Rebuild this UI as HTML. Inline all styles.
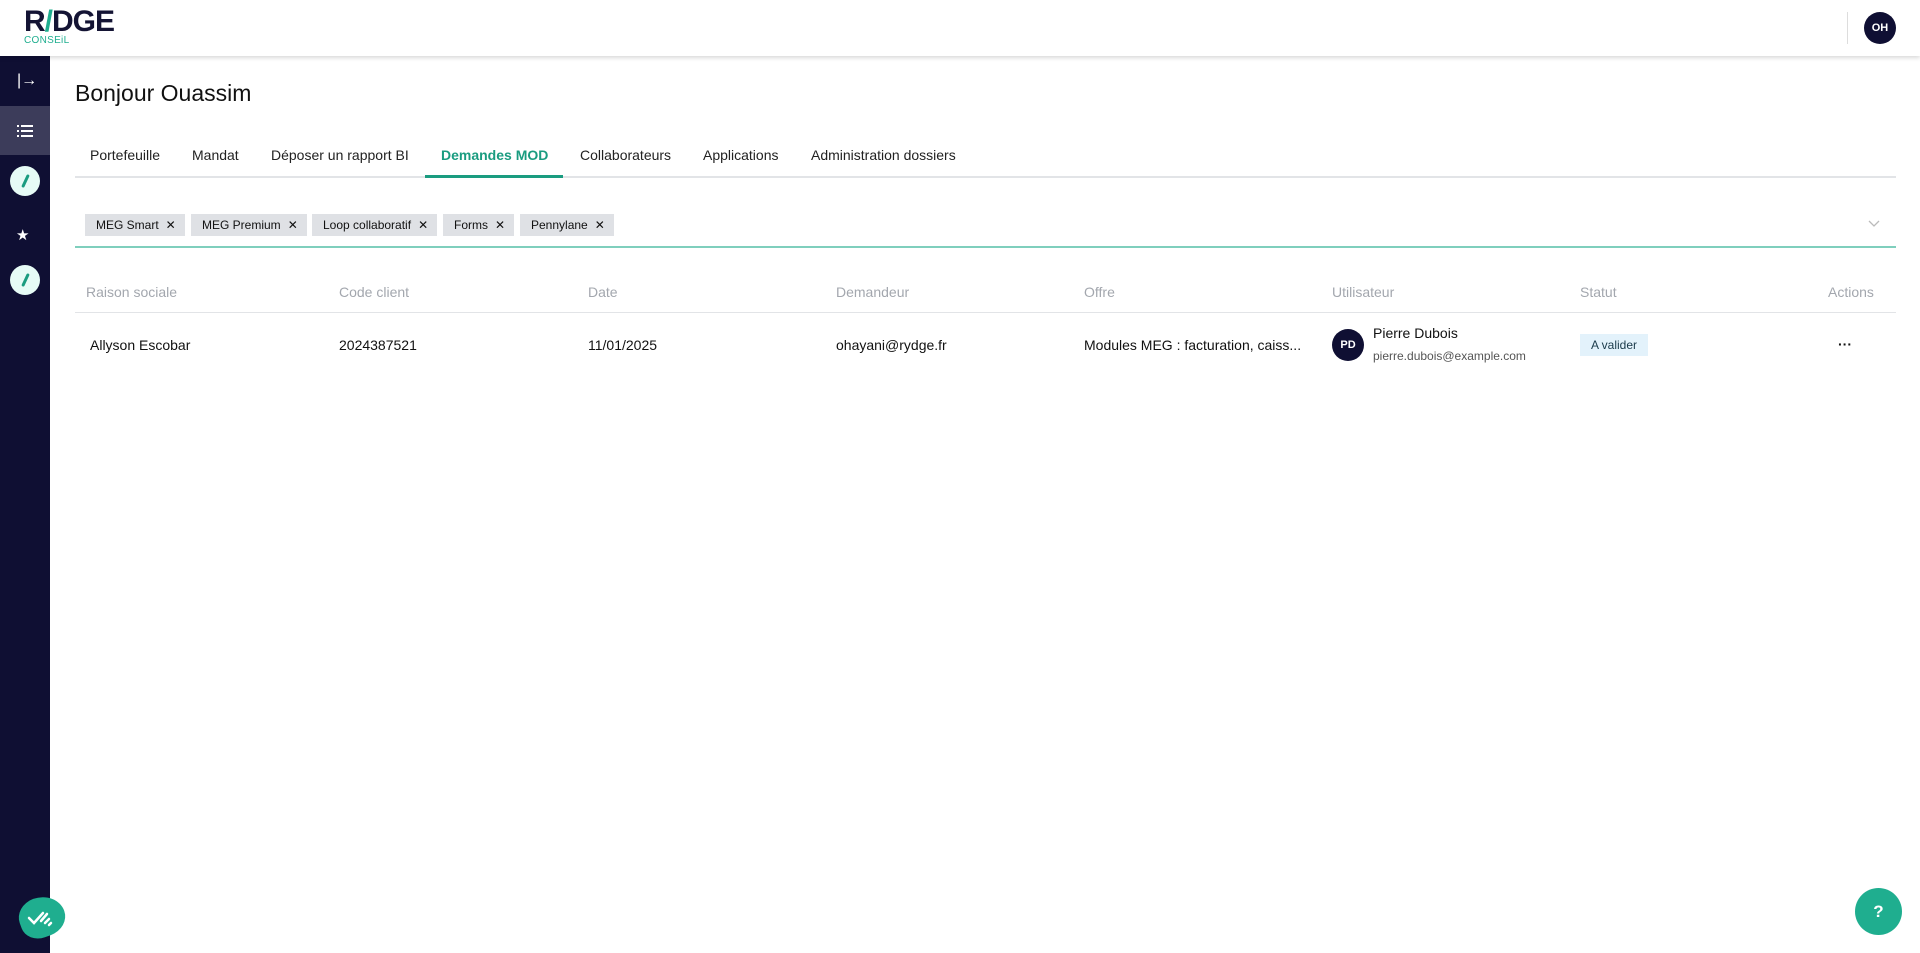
<!DOCTYPE html>
<html><head><meta charset="utf-8"><style>
*{box-sizing:border-box;margin:0;padding:0}
body{width:1920px;height:953px;overflow:hidden;background:#fff;font-family:"Liberation Sans",Arial,sans-serif;color:#111;position:relative}
.hdr{position:absolute;left:0;top:0;width:1920px;height:56px;background:#fff;box-shadow:0 2px 4px rgba(0,0,0,.15);z-index:2}
.side{position:absolute;left:0;top:56px;width:50px;height:897px;background:#0f0f33}
.abs{position:absolute}
.tab{position:absolute;top:147px;font-size:14px;color:#222}
.chip{position:absolute;top:214px;height:22px;background:#dfe1e5;font-size:12px;line-height:22px;padding:0 9px 0 11px;color:#111;white-space:nowrap}
.chip span{margin-left:7px;font-size:12px}
.th{position:absolute;top:284px;font-size:14px;color:#a3a7ae}
.td{position:absolute;top:337px;font-size:14px;color:#111}
.circ{position:absolute;left:10px;width:30px;height:30px;border-radius:50%;background:#e6fbf6}
.circ:after{content:"";position:absolute;left:14px;top:8px;width:3px;height:14px;background:#1a9c80;transform:rotate(25deg);border-radius:2px}
</style></head><body>
<div class="hdr">
  <div class="abs" style="left:24px;top:9px;font-size:30px;font-weight:bold;letter-spacing:-1px;color:#141434;line-height:26px">R<span style="color:#1fae8f">/</span>DGE</div>
  <div class="abs" style="left:24px;top:35px;font-size:10px;color:#1fae8f;letter-spacing:.3px">CONSEiL</div>
  <div class="abs" style="left:1847px;top:12px;width:1px;height:32px;background:#ddd"></div>
  <div class="abs" style="left:1864px;top:12px;width:32px;height:32px;border-radius:50%;background:#0f0f33;color:#fff;font-size:11px;font-weight:bold;text-align:center;line-height:32px">OH</div>
</div>
<div class="side">
  <div class="abs" style="left:17px;top:17px;color:#fff;font-size:16px;line-height:16px">|&#8594;</div>
  <div class="abs" style="left:0;top:50px;width:50px;height:49px;background:#3c3c5a"></div>
  <svg class="abs" style="left:17px;top:68px" width="16" height="14"><g fill="#fff"><rect x="0" y="1" width="2" height="2"/><rect x="4" y="1" width="12" height="2"/><rect x="0" y="6" width="2" height="2"/><rect x="4" y="6" width="12" height="2"/><rect x="0" y="11" width="2" height="2"/><rect x="4" y="11" width="12" height="2"/></g></svg>
  <div class="circ" style="top:110px"></div>
  <div class="abs" style="left:16px;top:170px;color:#fff;font-size:15px">&#9733;</div>
  <div class="circ" style="top:209px"></div>
</div>
<div class="abs" style="left:19px;top:897px;width:46px;height:40px;background:#1fae8f;border-radius:50% 60% 50% 45%;transform:rotate(-20deg)"></div>
<svg class="abs" style="left:26px;top:904px" width="32" height="26"><g stroke="#fff" stroke-width="2.5" fill="none" stroke-linecap="round"><path d="M3 14l5 5 9-10"/><path d="M15 17l6-7M19 19l4-4M23 21l2-2"/></g></svg>

<div class="abs" style="left:75px;top:80px;font-size:23px;color:#111">Bonjour Ouassim</div>
<div class="tab" style="left:90px">Portefeuille</div>
<div class="tab" style="left:192px">Mandat</div>
<div class="tab" style="left:271px">Déposer un rapport BI</div>
<div class="tab" style="left:441px;color:#1a9c80;font-weight:bold">Demandes MOD</div>
<div class="tab" style="left:580px">Collaborateurs</div>
<div class="tab" style="left:703px">Applications</div>
<div class="tab" style="left:811px">Administration dossiers</div>
<div class="abs" style="left:75px;top:176px;width:1821px;height:2px;background:#e2e4e7"></div>
<div class="abs" style="left:425px;top:175px;width:138px;height:3px;background:#1a9c80"></div>

<div class="chip" style="left:85px">MEG Smart<span>✕</span></div>
<div class="chip" style="left:191px">MEG Premium<span>✕</span></div>
<div class="chip" style="left:312px">Loop collaboratif<span>✕</span></div>
<div class="chip" style="left:443px">Forms<span>✕</span></div>
<div class="chip" style="left:520px">Pennylane<span>✕</span></div>
<svg class="abs" style="left:1868px;top:220px" width="12" height="8"><path d="M1 1l5 5 5-5" stroke="#bbb" fill="none" stroke-width="1.3"/></svg>
<div class="abs" style="left:75px;top:246px;width:1821px;height:2px;background:#7fcfbd"></div>

<div class="th" style="left:86px">Raison sociale</div>
<div class="th" style="left:339px">Code client</div>
<div class="th" style="left:588px">Date</div>
<div class="th" style="left:836px">Demandeur</div>
<div class="th" style="left:1084px">Offre</div>
<div class="th" style="left:1332px">Utilisateur</div>
<div class="th" style="left:1580px">Statut</div>
<div class="th" style="left:1828px">Actions</div>
<div class="abs" style="left:75px;top:312px;width:1821px;height:1px;background:#e2e4e7"></div>

<div class="td" style="left:90px">Allyson Escobar</div>
<div class="td" style="left:339px">2024387521</div>
<div class="td" style="left:588px">11/01/2025</div>
<div class="td" style="left:836px">ohayani@rydge.fr</div>
<div class="td" style="left:1084px">Modules MEG : facturation, caiss...</div>
<div class="abs" style="left:1332px;top:329px;width:32px;height:32px;border-radius:50%;background:#0f0f33;color:#fff;font-size:11px;font-weight:bold;text-align:center;line-height:32px">PD</div>
<div class="abs" style="left:1373px;top:325px;font-size:14px">Pierre Dubois</div>
<div class="abs" style="left:1373px;top:349px;font-size:12px;color:#555">pierre.dubois@example.com</div>
<div class="abs" style="left:1580px;top:334px;height:22px;padding:0 11px;background:#e3f2fb;font-size:12px;line-height:22px;color:#1a3a4a">A valider</div>
<div class="abs" style="left:1838px;top:336px;font-size:14px;font-weight:bold">···</div>

<div class="abs" style="left:1855px;top:888px;width:47px;height:47px;border-radius:50%;background:#1fae8f;color:#fff;font-size:17px;font-weight:bold;text-align:center;line-height:47px">?</div>
</body></html>
